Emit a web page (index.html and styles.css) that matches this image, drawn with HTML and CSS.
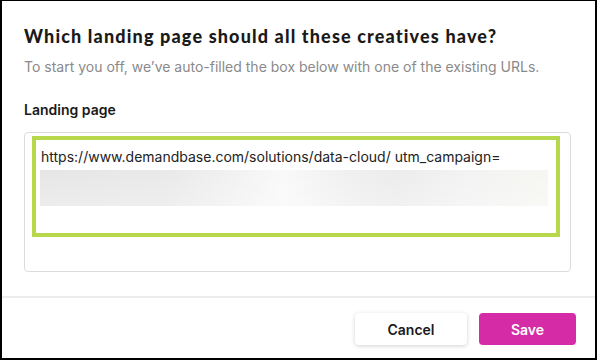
FILE: index.html
```html
<!DOCTYPE html>
<html lang="en">
<head>
<meta charset="utf-8">
<title>Landing page</title>
<link rel="stylesheet" href="styles.css">
</head>
<body>
<div class="dialog">
  <div class="content">
    <h1 class="title">Which landing page should all these creatives have?</h1>
    <p class="subtitle">To start you off, we’ve auto-filled the box below with one of the existing URLs.</p>
    <div class="label">Landing page</div>
    <div class="textbox">
      <div class="highlight">
        <div class="url">https://www.demandbase.com/solutions/data-cloud/ utm_campaign=</div>
        <div class="blurred"></div>
      </div>
    </div>
  </div>
  <div class="footer">
    <button class="btn btn-cancel">Cancel</button>
    <button class="btn btn-save">Save</button>
  </div>
</div>
</body>
</html>
```

FILE: styles.css
```css
* { box-sizing: border-box; }
html, body { margin: 0; padding: 0; background: #fff; }
body { font-family: Inter, "Liberation Sans", sans-serif; }

.dialog {
  width: 597px;
  height: 360px;
  border-top: 1px solid #000;
  border-left: 2px solid #000;
  border-right: 2px solid #000;
  border-bottom: 2px solid #000;
  background: #fff;
  display: flex;
  flex-direction: column;
}

.content {
  padding: 23px 22px 0 22px;
}

.title {
  margin: 0;
  font-family: Lato, "Open Sans", sans-serif;
  font-weight: 900;
  font-size: 18px;
  line-height: 24px;
  color: #1a1a1a;
  letter-spacing: 1.15px;
  white-space: nowrap;
}

.subtitle {
  margin: 9px 0 0 0;
  font-size: 14px;
  line-height: 20px;
  color: #8a8a8a;
  white-space: nowrap;
}

.label {
  margin-top: 23px;
  font-size: 14px;
  line-height: 20px;
  font-weight: 600;
  color: #1a1a1a;
}

.textbox {
  margin-top: 12px;
  width: 547px;
  height: 140px;
  border: 1px solid #dcdcdc;
  border-radius: 4px;
  padding: 3px 10px 0 7px;
}

.highlight {
  height: 101px;
  border: 4px solid #b7d84b;
  padding: 8px 8px 0 4px;
}

.url {
  padding-left: 1px;
  font-size: 14px;
  line-height: 18px;
  color: #222;
  white-space: nowrap;
}

.blurred {
  margin-top: 4px;
  height: 36px;
  background:
    linear-gradient(180deg, rgba(255,255,255,0) 0%, rgba(255,255,255,0.25) 100%),
    linear-gradient(90deg, #e6e6e6 0%, #e9e9e9 25%, #f3f3f3 40%, #f9f9f9 48%, #efefef 62%, #ececec 70%, #f3f3f3 85%, #f6f6f2 100%);
}

.footer {
  margin-top: 24px;
  border-top: 2px solid #ececec;
  padding: 15px 19px 0 0;
  display: flex;
  justify-content: flex-end;
  gap: 12px;
}

.btn {
  height: 32px;
  border: none;
  border-radius: 4px;
  font-family: Inter, "Liberation Sans", sans-serif;
  font-size: 14px;
  font-weight: 600;
  cursor: pointer;
}

.btn-cancel {
  width: 112px;
  background: #fff;
  color: #1a1a1a;
  box-shadow: 0 1px 4px rgba(0,0,0,0.18);
}

.btn-save {
  width: 97px;
  background: #d62ba7;
  color: #fff;
}
```
